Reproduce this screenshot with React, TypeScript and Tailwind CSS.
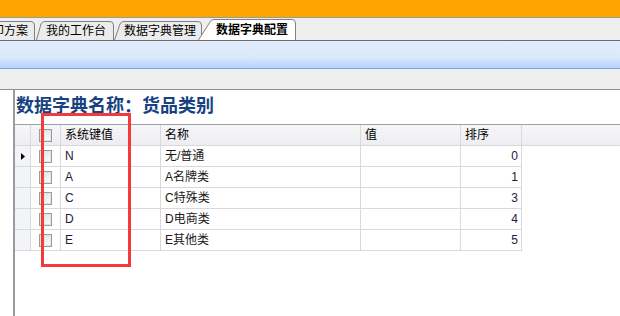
import React from 'react';
import clsx from 'clsx';

type TabProps = {
    label: string;
    w: number;
    h: number;
    slant: number;
    active?: boolean;
    className: string;
    textClassName: string;
};

// VS-style tab: slanted left edge, rounded top-right corner
const Tab: React.FC<TabProps> = ({ label, w, h, slant, active, className, textClassName }) => {
    const d = `M0.5 ${h} L${slant - 1} 3 Q${slant} 0.5 ${slant + 3} 0.5 L${w - 4} 0.5 Q${w - 0.5} 0.5 ${w - 0.5} 4 L${w - 0.5} ${h}`;
    return (
        <div className={clsx('relative shrink-0', className)}>
            <svg className="absolute inset-0" width={w} height={h} viewBox={`0 0 ${w} ${h}`}>
                <path d={d} fill={active ? '#ffffff' : '#ECECEC'} stroke="#808080" strokeWidth="1" />
            </svg>
            <span className={clsx('relative flex h-full items-center text-[12px] leading-none whitespace-nowrap text-black', active && 'font-bold', textClassName)}>
                {label}
            </span>
        </div>
    );
};

const CheckBox = () => (
    <div className="w-[13px] h-[13px] border border-[#9C9C9C] bg-gradient-to-br from-[#DCDCDC] to-white shadow-[inset_0_0_0_1px_#E4E4E4]" />
);

const rows = [
    { key: 'N', name: '无/普通', sort: 0 },
    { key: 'A', name: 'A名牌类', sort: 1 },
    { key: 'C', name: 'C特殊类', sort: 3 },
    { key: 'D', name: 'D电商类', sort: 4 },
    { key: 'E', name: 'E其他类', sort: 5 },
];

const cols = 'grid grid-cols-[16px_30px_100px_200px_100px_61px_1fr]';
const line = 'border-[#D8D8DE]';

export default function App() {
    return (
        <div className="relative w-[620px] h-[316px] overflow-hidden bg-white flex flex-col font-['Liberation_Sans','Noto_Sans_CJK_SC',sans-serif] text-[12px]">
            {/* top orange band */}
            <div className="h-[18px] shrink-0 bg-[#FFA500] border-b border-[#9A9A9A]" />

            {/* tab strip */}
            <div className="h-[23px] shrink-0 bg-[#EFEFEF] border-b border-[#6D6D6D] flex items-end overflow-hidden">
                <Tab label="打印方案" w={74} h={19} slant={6} className="w-[74px] h-[19px] ml-[-39px]" textClassName="justify-end pr-[7px]" />
                <Tab label="我的工作台" w={78} h={19} slant={6} className="w-[78px] h-[19px] ml-[1px]" textClassName="pl-[10px]" />
                <Tab label="数据字典管理" w={88} h={19} slant={7} className="w-[88px] h-[19px]" textClassName="pl-[10px]" />
                <Tab label="数据字典配置" w={98} h={21} slant={13} active className="w-[98px] h-[21px] ml-[-4px] z-10" textClassName="pl-[18px]" />
            </div>

            {/* toolbar */}
            <div className="h-[28px] shrink-0 bg-gradient-to-b from-[#E1EDFD] via-[#DCE9FC] via-60% to-[#B5D2FA] border-b border-[#7BA7E0]" />

            {/* grey strip */}
            <div className="h-[21px] shrink-0 bg-[#EFEFEF] border-b border-[#8E8E96]" />

            {/* content */}
            <div className="flex-1 flex min-h-0">
                <div className="w-[13px] shrink-0" />
                <div className="flex-1 min-w-0 border-l-2 border-[#9A9AA2]">
                    <div className="mt-[2px] h-[24px] leading-[24px] pl-[1px] text-[18px] font-bold text-[#174282] font-['Noto_Sans_CJK_SC',sans-serif] whitespace-nowrap">
                        数据字典名称：货品类别
                    </div>

                    <div className="mt-[8px] text-[#1B1B3A]">
                        {/* header */}
                        <div className={clsx(cols, 'h-[22px] border-t border-b border-t-[#A0A0A8] border-b-[#D8D8DE] bg-gradient-to-b from-[#F6F6F8] to-[#EEEEF2] text-black')}>
                            <div className={clsx('border-r', line)} />
                            <div className={clsx('border-r flex items-center justify-center', line)}>
                                <CheckBox />
                            </div>
                            <div className={clsx('border-r flex items-center pl-[4px]', line)}>系统键值</div>
                            <div className={clsx('border-r flex items-center pl-[4px]', line)}>名称</div>
                            <div className={clsx('border-r flex items-center pl-[4px]', line)}>值</div>
                            <div className={clsx('border-r flex items-center pl-[4px]', line)}>排序</div>
                            <div />
                        </div>

                        {rows.map((r, i) => (
                            <div key={r.key} className={clsx(cols, 'h-[21px]')}>
                                <div className={clsx('border-r border-b bg-[#F3F4F6] flex items-center pl-[6px]', line)}>
                                    {i === 0 && (
                                        <svg width="4" height="7" viewBox="0 0 4 7">
                                            <polygon points="0,0 4,3.5 0,7" fill="#000" />
                                        </svg>
                                    )}
                                </div>
                                <div className={clsx('border-r border-b flex items-center justify-center', line)}>
                                    <CheckBox />
                                </div>
                                <div className={clsx('border-r border-b flex items-center pl-[4px]', line)}>{r.key}</div>
                                <div className={clsx('border-r border-b flex items-center pl-[4px] text-[#1a1a1a]', line)}>{r.name}</div>
                                <div className={clsx('border-r border-b', line)} />
                                <div className={clsx('border-r border-b flex items-center justify-end pr-[3px]', line)}>{r.sort}</div>
                                <div />
                            </div>
                        ))}
                    </div>
                </div>
            </div>

            {/* red highlight box */}
            <div className="absolute left-[41px] top-[113px] w-[90px] h-[154px] border-[3px] border-[#F23B3B]" />
        </div>
    );
}
